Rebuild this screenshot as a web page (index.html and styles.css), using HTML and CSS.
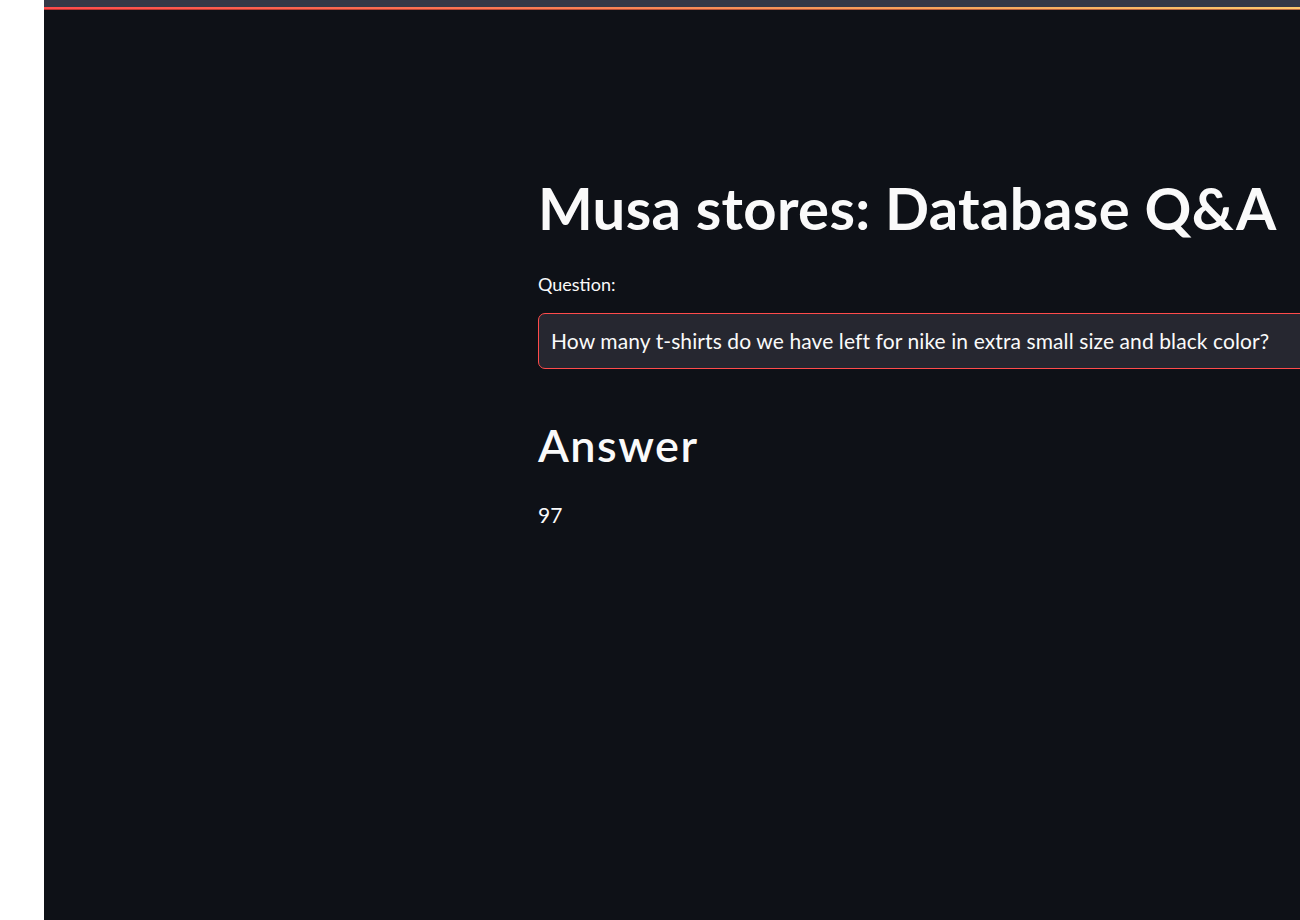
FILE: index.html
```html
<!DOCTYPE html>
<html lang="en">
<head>
<meta charset="utf-8">
<title>Musa stores: Database Q&amp;A</title>
<link rel="stylesheet" href="styles.css">
</head>
<body>
<div class="page">
  <div class="gutter"></div>
  <div class="app">
    <div class="topbar"></div>
    <div class="decoration"></div>
    <main class="main">
      <div class="block">
        <h1 class="title">Musa stores: Database Q&amp;A</h1>
        <label class="label" for="q">Question:</label>
        <div class="input-wrap">
          <input id="q" class="input" type="text" value="How many t-shirts do we have left for nike in extra small size and black color?">
        </div>
        <h2 class="subtitle">Answer</h2>
        <p class="answer">97</p>
      </div>
    </main>
  </div>
</div>
</body>
</html>
```

FILE: styles.css
```css
* { box-sizing: border-box; }
html, body { margin: 0; padding: 0; height: 100%; }
body { background: #ffffff; font-family: "Lato", "Noto Sans", sans-serif; overflow: hidden; }
.page { display: flex; height: 920px; }
.gutter { width: 44px; flex: none; background: #ffffff; }
.app { flex: 1; background: #0e1117; display: flex; flex-direction: column; overflow: hidden; }
.topbar { height: 7px; background: #353847; flex: none; }
.decoration { height: 3px; flex: none; background: linear-gradient(90deg, #ff4b4b, #f7a35c 70%, #ffc86e); box-shadow: inset 0 -1px 0 rgba(120, 30, 30, 0.55); }
.main { flex: 1; padding: 0 0 0 494px; }
.block { width: 1000px; display: flex; flex-direction: column; color: #fafafa; }
.title { margin: 163px 0 0; font-size: 58px; font-weight: 700; line-height: 1.2; letter-spacing: 0.35px; color: #fafafa; white-space: nowrap; }
.label { margin-top: 29px; font-size: 18px; line-height: 1.4; color: #fafafa; }
.input-wrap { margin-top: 16px; height: 56px; border: 1px solid #ff4b4b; border-radius: 7px; background: #262730; display: flex; align-items: center; }
.input { width: 100%; height: 100%; background: transparent; border: none; outline: none; color: #fafafa; font-family: inherit; font-size: 21px; letter-spacing: 0.1px; padding: 0 12px; }
.subtitle { margin: 49px 0 0; font-size: 45px; font-weight: 600; line-height: 1.2; letter-spacing: 1.5px; color: #fafafa; }
.answer { margin: 28px 0 0; font-size: 21px; line-height: 1.4; color: #fafafa; }
```
